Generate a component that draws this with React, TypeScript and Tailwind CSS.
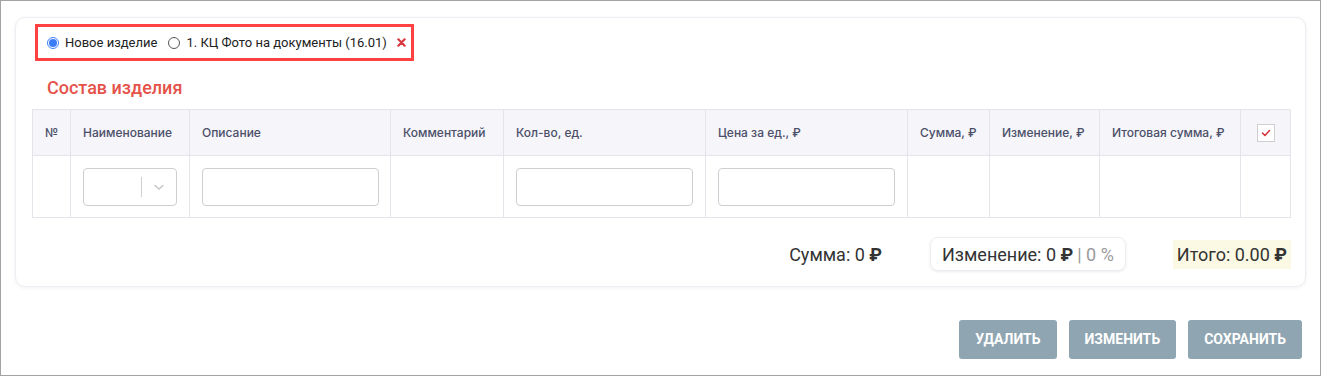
import React from "react";

const cols = [
  { label: "№", w: "w-[38px]" },
  { label: "Наименование", w: "w-[119px]" },
  { label: "Описание", w: "w-[201px]" },
  { label: "Комментарий", w: "w-[113px]" },
  { label: "Кол-во, ед.", w: "w-[202px]" },
  { label: "Цена за ед., ₽", w: "w-[202px]" },
  { label: "Сумма, ₽", w: "w-[82px]" },
  { label: "Изменение, ₽", w: "w-[110px]" },
  { label: "Итоговая сумма, ₽", w: "w-[141px]" },
];

function TextInput({ width }: { width: string }) {
  return <div className={`${width} h-[38px] rounded-[4px] border border-[#cfcfcf] bg-white`} />;
}

export default function App() {
  return (
    <div className="w-[1321px] h-[376px] border border-[#a3a3a3] bg-white font-['Roboto',sans-serif] text-[#333] overflow-hidden">
      {/* Card */}
      <div className="ml-[14px] mt-[16px] w-[1291px] h-[270px] rounded-[10px] border border-[#ececf2] shadow-[0_1px_4px_rgba(0,0,0,0.06)] px-[16px] pt-[6px]">
        {/* Radio selector */}
        <div className="ml-[3px] w-[379px] h-[37px] border-[3px] border-[#ff4141] flex items-center pl-[9px] text-[13px] text-[#222]">
          <label className="flex items-center gap-[6px]">
            <span className="w-[12px] h-[12px] rounded-full border border-[#3b82f6] flex items-center justify-center">
              <span className="w-[8px] h-[8px] rounded-full bg-[#3b7cf6]" />
            </span>
            Новое изделие
          </label>
          <label className="flex items-center gap-[6px] ml-[11px]">
            <span className="w-[12px] h-[12px] rounded-full border border-[#555]" />
            1. КЦ Фото на документы (16.01)
          </label>
          <svg className="ml-[10px] w-[9px] h-[9px]" viewBox="0 0 10 10">
            <path d="M1.5 1.5l7 7M8.5 1.5l-7 7" stroke="#d9363e" strokeWidth="2.4" strokeLinecap="round" />
          </svg>
        </div>

        {/* Heading */}
        <h2 className="ml-[15px] mt-[14px] text-[18px] font-medium text-[#e5524a] leading-[25px]">Состав изделия</h2>

        {/* Table */}
        <table className="mt-[9px] w-[1258px] border-collapse table-fixed font-['Inter',sans-serif]">
          <colgroup>
            {cols.map((c) => (
              <col key={c.label} className={c.w} />
            ))}
            <col className="w-[50px]" />
          </colgroup>
          <thead>
            <tr className="h-[46px] bg-[#f5f5fa]">
              {cols.map((c) => (
                <th
                  key={c.label}
                  className="border border-[#e4e4ea] px-[12px] text-left text-[12px] font-medium text-[#4b4f68] whitespace-nowrap"
                >
                  {c.label}
                </th>
              ))}
              <th className="border border-[#e4e4ea]">
                <div className="mx-auto w-[18px] h-[18px] border border-[#cfcfcf] bg-white flex items-center justify-center">
                  <svg className="w-[10px] h-[10px]" viewBox="0 0 10 10">
                    <path d="M1.5 5l2.5 2.5 4.5-5" fill="none" stroke="#d9363e" strokeWidth="1.6" strokeLinecap="round" strokeLinejoin="round" />
                  </svg>
                </div>
              </th>
            </tr>
          </thead>
          <tbody>
            <tr className="h-[62px]">
              <td className="border border-[#e4e4ea]" />
              <td className="border border-[#e4e4ea] px-[12px]">
                <div className="w-[94px] h-[38px] rounded-[4px] border border-[#cfcfcf] flex items-center">
                  <div className="flex-1" />
                  <span className="w-px h-[20px] bg-[#cfcfcf]" />
                  <svg className="w-[12px] h-[12px] mx-[11px]" viewBox="0 0 12 12">
                    <path d="M2 4.5l4 3.5 4-3.5" fill="none" stroke="#c4c4c4" strokeWidth="1.4" strokeLinecap="round" strokeLinejoin="round" />
                  </svg>
                </div>
              </td>
              <td className="border border-[#e4e4ea] px-[12px]">
                <TextInput width="w-[177px]" />
              </td>
              <td className="border border-[#e4e4ea]" />
              <td className="border border-[#e4e4ea] px-[12px]">
                <TextInput width="w-[177px]" />
              </td>
              <td className="border border-[#e4e4ea] px-[12px]">
                <TextInput width="w-[177px]" />
              </td>
              <td className="border border-[#e4e4ea]" />
              <td className="border border-[#e4e4ea]" />
              <td className="border border-[#e4e4ea]" />
              <td className="border border-[#e4e4ea]" />
            </tr>
          </tbody>
        </table>

        {/* Totals */}
        <div className="mt-[19px] flex items-center justify-end text-[18px] text-[#333] w-[1259px]">
          <span>
            Сумма: 0 <b>₽</b>
          </span>
          <div className="ml-[48px] h-[34px] px-[11px] flex items-center rounded-[8px] border border-[#ececf2] shadow-[0_1px_3px_rgba(0,0,0,0.08)]">
            Изменение: 0&nbsp;<b>₽</b>
            <span className="ml-[4px] text-[#9a9a9a]">| 0 %</span>
          </div>
          <span className="ml-[47px] h-[29px] px-[4px] flex items-center bg-[#fbf8e4]">
            Итого: 0.00&nbsp;<b>₽</b>
          </span>
        </div>
      </div>

      {/* Actions */}
      <div className="mt-[33px] mr-[18px] flex justify-end gap-[12px]">
        {["УДАЛИТЬ", "ИЗМЕНИТЬ", "СОХРАНИТЬ"].map((t) => (
          <button
            key={t}
            className="h-[39px] px-[16px] rounded-[3px] bg-[#8fa5b2] text-white text-[14px] font-bold"
          >
            {t}
          </button>
        ))}
      </div>
    </div>
  );
}
